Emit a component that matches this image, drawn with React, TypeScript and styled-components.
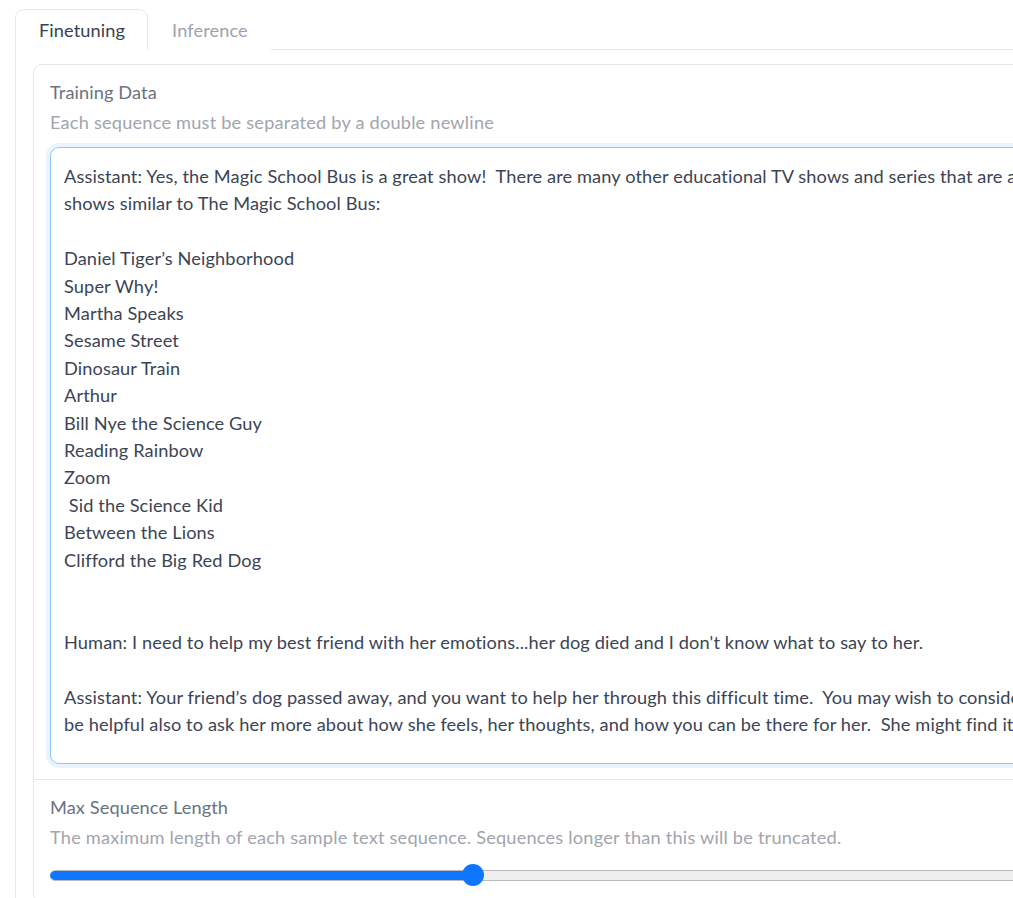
import React from "react";
import styled, { createGlobalStyle } from "styled-components";

const GlobalStyle = createGlobalStyle`
  html, body {
    margin: 0;
    padding: 0;
    background: #ffffff;
    overflow: hidden;
  }
  body {
    font-family: Lato, "Liberation Sans", sans-serif;
  }
  * { box-sizing: border-box; }
`;

const Page = styled.div`
  width: 1500px;
  padding: 9px 0 0 15px;
`;

const TabNav = styled.div`
  display: flex;
  align-items: flex-end;
  border-bottom: 1px solid #e5e7eb;
`;

const TabButton = styled.button<{ $active?: boolean }>`
  font-family: inherit;
  font-size: 18.2px;
  line-height: 27px;
  letter-spacing: 0.1px;
  height: 41px;
  padding: 0 22px 0 23px;
  margin-bottom: -1px;
  background: #ffffff;
  cursor: pointer;
  color: ${(p) => (p.$active ? "#374151" : "#9ca3af")};
  border: 1px solid ${(p) => (p.$active ? "#e5e7eb" : "transparent")};
  border-bottom: none;
  border-radius: 9px 9px 0 0;
`;

const TabPanel = styled.div`
  border: 1px solid #e5e7eb;
  border-top: none;
  padding: 14px 17px 0 17px;
  height: 900px;
`;

const Form = styled.div`
  display: flex;
  flex-direction: column;
  gap: 1px;
  background: #e5e7eb;
  border: 1px solid #e5e7eb;
  border-radius: 9px;
  overflow: hidden;
`;

const Block = styled.div`
  background: #ffffff;
  padding: 14px 16px 15px 16px;
  display: flex;
  flex-direction: column;
`;

const Label = styled.span`
  display: block;
  font-size: 18.2px;
  line-height: 27px;
  letter-spacing: 0.1px;
  color: #6b7280;
`;

const Info = styled.span`
  display: block;
  margin-top: 3px;
  font-size: 18.2px;
  line-height: 27px;
  letter-spacing: 0.2px;
  color: #a1a5ad;
`;

const TextArea = styled.textarea`
  display: block;
  margin-top: 11px;
  width: 100%;
  height: 617px;
  padding: 15px 13px 12px 13px;
  font-family: inherit;
  font-size: 18.2px;
  line-height: 27.4px;
  letter-spacing: 0.12px;
  color: #3b4454;
  background: #ffffff;
  border: 1px solid #93c5fd;
  border-radius: 9px;
  box-shadow: 0 0 0 4px rgba(219, 234, 254, 0.55);
  resize: none;
  overflow: hidden;
  white-space: pre;
  outline: none;
`;

const SliderRow = styled.div`
  margin-top: 12px;
  height: 24px;
  display: flex;
  align-items: center;
`;

const Range = styled.input`
  -webkit-appearance: none;
  appearance: none;
  width: 100%;
  height: 11px;
  margin: 0;
  border-radius: 6px;
  border-top: 1px solid #b8b8b8;
  border-bottom: 1px solid #b8b8b8;
  background: #efefef;

  &::-webkit-slider-runnable-track {
    height: 9px;
    background: transparent;
  }
  &::-webkit-slider-thumb {
    -webkit-appearance: none;
    appearance: none;
    width: 22px;
    height: 22px;
    margin-top: -6.5px;
    border-radius: 50%;
    background: #0f76ff;
    border: none;
  }
`;

const trainingText = `Assistant: Yes, the Magic School Bus is a great show!  There are many other educational TV shows and series that are aimed at kids and also fun to watch.  Here are some
shows similar to The Magic School Bus:

Daniel Tiger’s Neighborhood
Super Why!
Martha Speaks
Sesame Street
Dinosaur Train
Arthur
Bill Nye the Science Guy
Reading Rainbow
Zoom
 Sid the Science Kid
Between the Lions
Clifford the Big Red Dog


Human: I need to help my best friend with her emotions...her dog died and I don't know what to say to her.

Assistant: Your friend’s dog passed away, and you want to help her through this difficult time.  You may wish to consider sending her a card or some flowers.  It might
be helpful also to ask her more about how she feels, her thoughts, and how you can be there for her.  She might find it comforting to talk about her dog.`;

export default function App() {
  const value = 606;
  const max = 2048;
  const frac = value / max;
  const stop = `calc(11px + ${frac} * (100% - 22px))`;
  return (
    <>
      <GlobalStyle />
      <Page>
        <TabNav>
          <TabButton $active>Finetuning</TabButton>
          <TabButton>Inference</TabButton>
        </TabNav>
        <TabPanel>
          <Form>
            <Block>
              <Label>Training Data</Label>
              <Info>Each sequence must be separated by a double newline</Info>
              <TextArea readOnly wrap="off" defaultValue={trainingText} />
            </Block>
            <Block>
              <Label>Max Sequence Length</Label>
              <Info>
                The maximum length of each sample text sequence. Sequences longer than this will be truncated.
              </Info>
              <SliderRow>
                <Range
                  type="range"
                  min={0}
                  max={max}
                  defaultValue={value}
                  style={{
                    background: `linear-gradient(to right, #0f76ff 0, #0f76ff ${stop}, #efefef ${stop}, #efefef 100%)`,
                  }}
                />
              </SliderRow>
            </Block>
          </Form>
        </TabPanel>
      </Page>
    </>
  );
}
